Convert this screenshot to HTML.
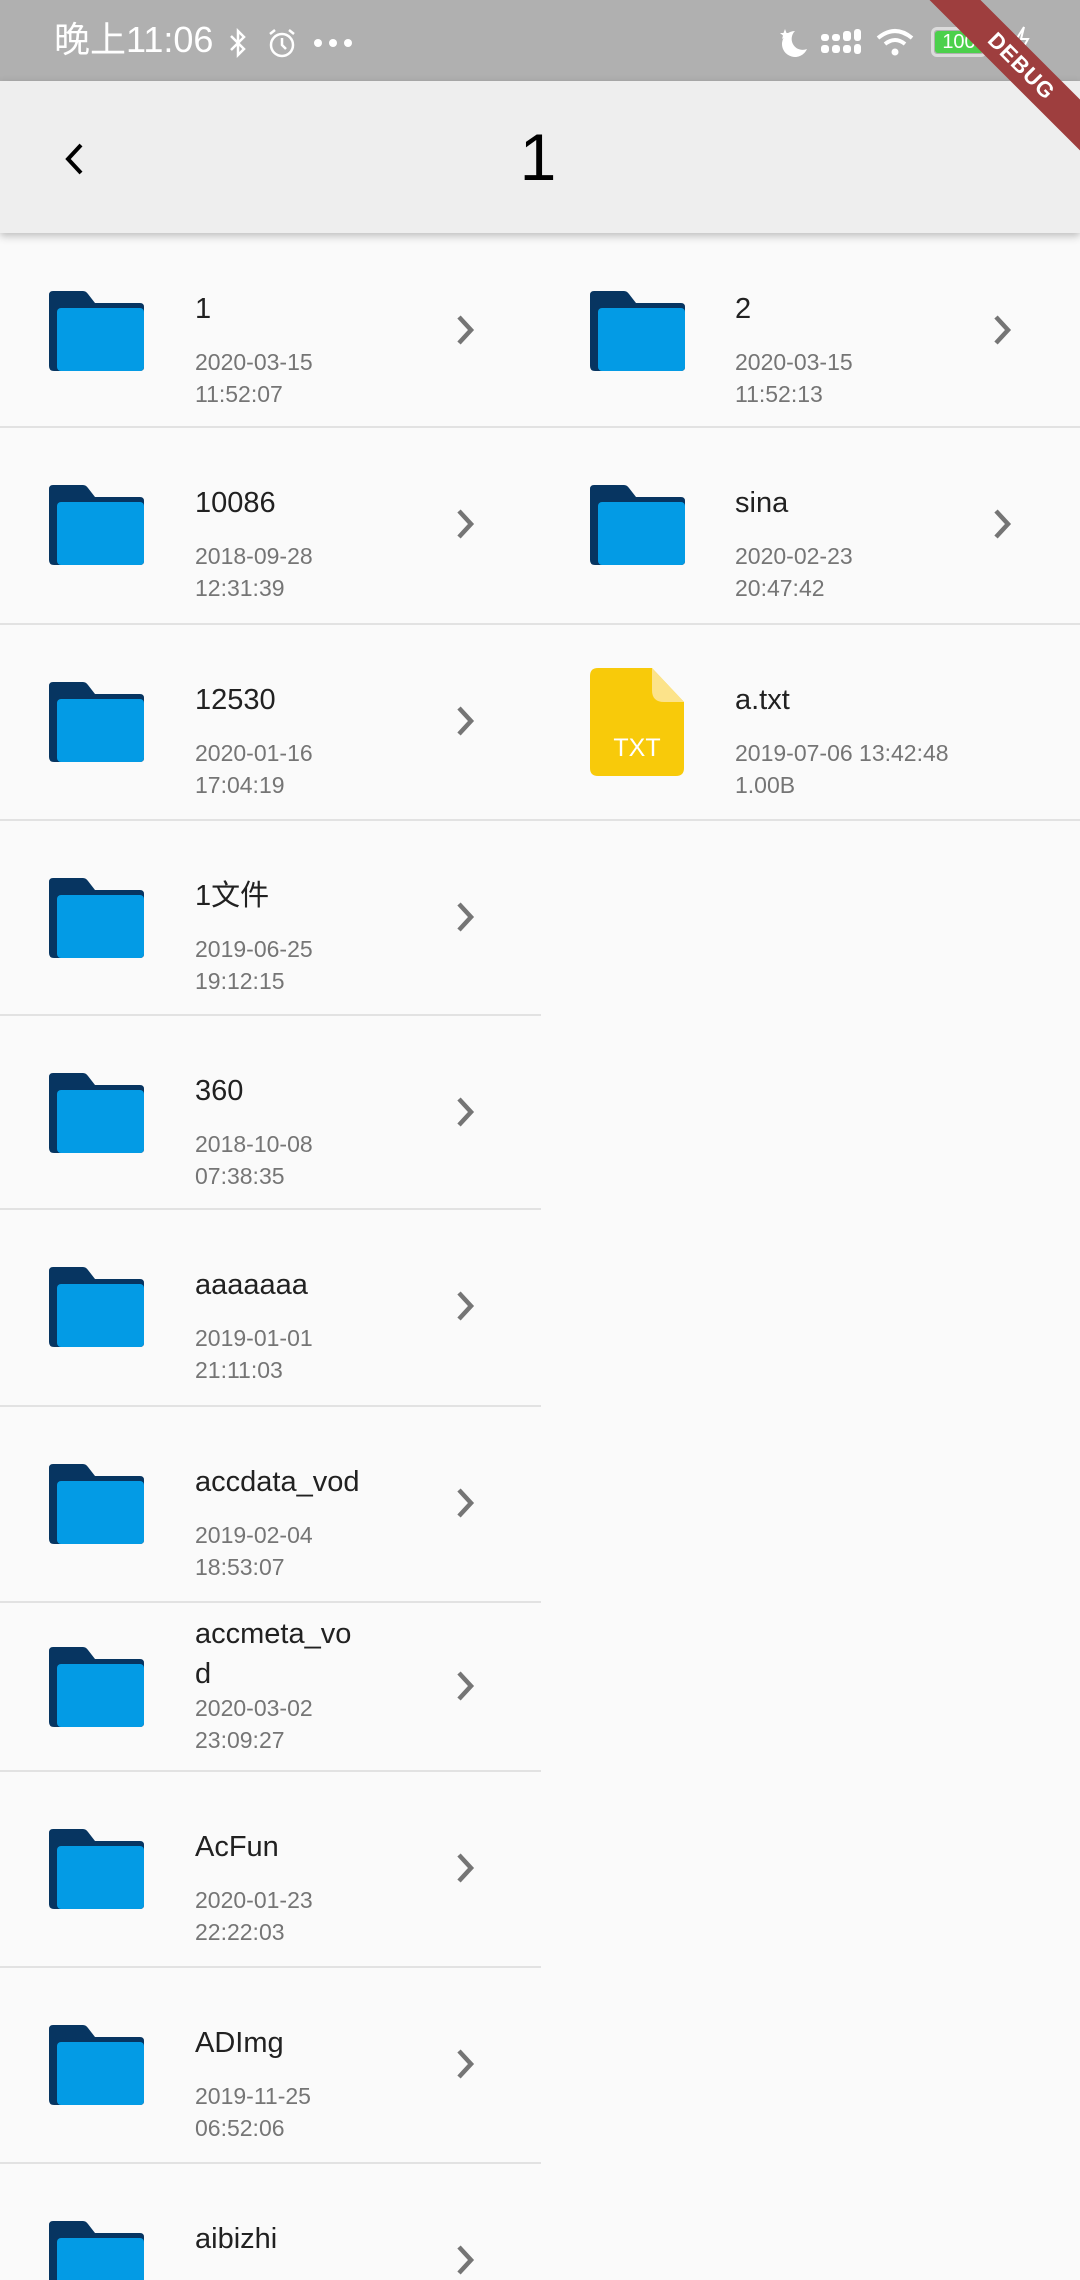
<!DOCTYPE html>
<html style="width:1080px;height:2280px;overflow:hidden"><head><meta charset="utf-8">
<style>
*{margin:0;padding:0;box-sizing:border-box}
body{width:1080px;height:2280px;overflow:hidden;background:#fafafa;font-family:"Liberation Sans","Noto Sans CJK SC",sans-serif;position:relative}
#sb{position:absolute;left:0;top:0;width:1080px;height:81px;background:#b0b0b0;color:#fff}
#ab{position:absolute;left:0;top:81px;width:1080px;height:152px;background:#eeeeee;box-shadow:0 3px 8px rgba(0,0,0,0.25);z-index:2}
.it{position:absolute;height:196px;overflow:hidden}
.it svg.f{position:absolute;left:49px;top:58px;width:95px;height:80px}
.nm{position:absolute;left:146px;top:56px;font-size:29px;line-height:40px;color:#212121}
.d{position:absolute;left:146px;font-size:23px;line-height:32px;color:#757575}
.d1{top:113px}.d2{top:145px}
.ch{position:absolute;left:455px;top:81px;width:22px;height:32px}
.sep{position:absolute;left:0;height:2px;background:#e2e2e2}
</style></head><body>
<svg width="0" height="0" style="position:absolute">
<defs>
<symbol id="fold" viewBox="0 0 95 80">
<path d="M0,4 Q0,0 4,0 H34 Q37,0 39,3 L46,12 H91 Q95,12 95,16 V76 Q95,80 91,80 H5 Q0,80 0,75 Z" fill="#073561"/>
<rect x="8" y="17" width="87" height="63" rx="4" fill="#039be5"/>
</symbol>
<symbol id="chev" viewBox="0 0 22 32"><path d="M4,3 L16,16 L4,29" fill="none" stroke="#757575" stroke-width="4.5"/></symbol>
</defs></svg>

<div id="sb">
<div style="position:absolute;left:54px;top:18px;font-size:36px;line-height:44px">晚上11:06</div>
<svg style="position:absolute;left:228px;top:27px" width="20" height="32" viewBox="0 0 20 32"><path d="M3,9 L16,22 L10,28 V4 L16,10 L3,23" fill="none" stroke="#fff" stroke-width="2.5"/></svg>
<svg style="position:absolute;left:266px;top:27px" width="32" height="32" viewBox="0 0 32 32"><circle cx="16" cy="18" r="11" fill="none" stroke="#fff" stroke-width="2.5"/><path d="M16,11 V18 L20,22 M4,7 L9,3 M28,7 L23,3" stroke="#fff" stroke-width="2.5" fill="none"/></svg>
<div style="position:absolute;left:314px;top:39px;width:8px;height:8px;border-radius:4px;background:#fff"></div>
<div style="position:absolute;left:329px;top:39px;width:8px;height:8px;border-radius:4px;background:#fff"></div>
<div style="position:absolute;left:344px;top:39px;width:8px;height:8px;border-radius:4px;background:#fff"></div>
<svg style="position:absolute;left:777px;top:27px" width="32" height="32" viewBox="0 0 32 32"><path d="M18,4 A13,13 0 1 0 30,22 A11,11 0 0 1 18,4 Z" fill="#fff"/><path d="M8,2 L9.5,6 L13,6 L10,8.5 L11,12 L8,10 L5,12 L6,8.5 L3,6 L6.5,6Z" fill="#fff"/></svg>
<svg style="position:absolute;left:821px;top:29px" width="40" height="28" viewBox="0 0 40 28"><g fill="#fff"><rect x="0" y="5" width="8" height="7" rx="3"/><rect x="11" y="5" width="8" height="7" rx="3"/><rect x="22" y="2" width="8" height="10" rx="3"/><rect x="33" y="0" width="7" height="12" rx="3"/><rect x="0" y="16" width="8" height="8" rx="3"/><rect x="11" y="16" width="8" height="8" rx="3"/><rect x="22" y="16" width="8" height="8" rx="3"/><rect x="33" y="15" width="7" height="10" rx="3"/></g></svg>
<svg style="position:absolute;left:875px;top:28px" width="40" height="28" viewBox="0 0 40 28"><path d="M3,10 Q20,-4 37,10" fill="none" stroke="#fff" stroke-width="4"/><path d="M10,16 Q20,8 30,16" fill="none" stroke="#fff" stroke-width="4"/><circle cx="20" cy="24" r="3.5" fill="#fff"/></svg>
<div style="position:absolute;left:931px;top:27px;width:56px;height:30px;border:3px solid rgba(255,255,255,0.55);border-radius:6px"></div>
<div style="position:absolute;left:935px;top:31px;width:48px;height:22px;background:#4cd04c;border-radius:3px;color:#fff;font-size:20px;line-height:22px;text-align:center">100</div>
<svg style="position:absolute;left:1010px;top:25px" width="22" height="34" viewBox="0 0 22 34"><path d="M14,2 L4,18 H11 L8,32 L18,14 H11 L14,2 Z" fill="none" stroke="#fff" stroke-width="2"/></svg>
</div>

<div id="ab">
<svg style="position:absolute;left:62px;top:61px" width="24" height="34" viewBox="0 0 24 34"><path d="M19,3 L6,17 L19,31" fill="none" stroke="#000" stroke-width="4"/></svg>
<div style="position:absolute;left:0;width:1076px;top:36px;text-align:center;font-size:66px;line-height:80px;color:#000">1</div>
</div>

<div style="position:absolute;left:887px;top:49px;width:270px;height:36px;background:#9e3e3e;transform:rotate(45deg);color:#fff;font-weight:bold;font-size:22px;line-height:36px;text-align:center;z-index:5;letter-spacing:1px;text-indent:-2px">DEBUG</div>

<div class="it" style="left:0;top:233px;width:541px"><svg class="f"><use href="#fold"/></svg><div class="nm" style="left:195px">1</div><div class="d d1" style="left:195px">2020-03-15</div><div class="d d2" style="left:195px">11:52:07</div><svg class="ch"><use href="#chev"/></svg></div>
<div class="it" style="left:0;top:427px;width:541px"><svg class="f"><use href="#fold"/></svg><div class="nm" style="left:195px">10086</div><div class="d d1" style="left:195px">2018-09-28</div><div class="d d2" style="left:195px">12:31:39</div><svg class="ch"><use href="#chev"/></svg></div>
<div class="it" style="left:0;top:624px;width:541px"><svg class="f"><use href="#fold"/></svg><div class="nm" style="left:195px">12530</div><div class="d d1" style="left:195px">2020-01-16</div><div class="d d2" style="left:195px">17:04:19</div><svg class="ch"><use href="#chev"/></svg></div>
<div class="it" style="left:0;top:820px;width:541px"><svg class="f"><use href="#fold"/></svg><div class="nm" style="left:195px">1文件</div><div class="d d1" style="left:195px">2019-06-25</div><div class="d d2" style="left:195px">19:12:15</div><svg class="ch"><use href="#chev"/></svg></div>
<div class="it" style="left:0;top:1015px;width:541px"><svg class="f"><use href="#fold"/></svg><div class="nm" style="left:195px">360</div><div class="d d1" style="left:195px">2018-10-08</div><div class="d d2" style="left:195px">07:38:35</div><svg class="ch"><use href="#chev"/></svg></div>
<div class="it" style="left:0;top:1209px;width:541px"><svg class="f"><use href="#fold"/></svg><div class="nm" style="left:195px">aaaaaaa</div><div class="d d1" style="left:195px">2019-01-01</div><div class="d d2" style="left:195px">21:11:03</div><svg class="ch"><use href="#chev"/></svg></div>
<div class="it" style="left:0;top:1406px;width:541px"><svg class="f"><use href="#fold"/></svg><div class="nm" style="left:195px">accdata_vod</div><div class="d d1" style="left:195px">2019-02-04</div><div class="d d2" style="left:195px">18:53:07</div><svg class="ch"><use href="#chev"/></svg></div>
<div class="it" style="left:0;top:1602px;width:541px;height:169px"><svg class="f" style="top:45px"><use href="#fold"/></svg><div class="nm" style="left:195px;top:12px">accmeta_vo<br>d</div><div class="d" style="left:195px;top:90px">2020-03-02</div><div class="d" style="left:195px;top:122px">23:09:27</div><svg class="ch" style="top:68px"><use href="#chev"/></svg></div>
<div class="it" style="left:0;top:1771px;width:541px"><svg class="f"><use href="#fold"/></svg><div class="nm" style="left:195px">AcFun</div><div class="d d1" style="left:195px">2020-01-23</div><div class="d d2" style="left:195px">22:22:03</div><svg class="ch"><use href="#chev"/></svg></div>
<div class="it" style="left:0;top:1967px;width:541px"><svg class="f"><use href="#fold"/></svg><div class="nm" style="left:195px">ADImg</div><div class="d d1" style="left:195px">2019-11-25</div><div class="d d2" style="left:195px">06:52:06</div><svg class="ch"><use href="#chev"/></svg></div>
<div class="it" style="left:0;top:2163px;width:541px;height:117px"><svg class="f"><use href="#fold"/></svg><div class="nm" style="left:195px">aibizhi</div><svg class="ch"><use href="#chev"/></svg></div>

<div class="it" style="left:541px;top:233px;width:539px"><svg class="f"><use href="#fold"/></svg><div class="nm" style="left:194px">2</div><div class="d d1" style="left:194px">2020-03-15</div><div class="d d2" style="left:194px">11:52:13</div><svg class="ch" style="left:451px"><use href="#chev"/></svg></div>
<div class="it" style="left:541px;top:427px;width:539px"><svg class="f"><use href="#fold"/></svg><div class="nm" style="left:194px">sina</div><div class="d d1" style="left:194px">2020-02-23</div><div class="d d2" style="left:194px">20:47:42</div><svg class="ch" style="left:451px"><use href="#chev"/></svg></div>
<div class="it" style="left:541px;top:624px;width:539px">
<svg style="position:absolute;left:49px;top:44px" width="94" height="108" viewBox="0 0 94 108"><path d="M8,0 H62 L94,34 V100 Q94,108 86,108 H8 Q0,108 0,100 V8 Q0,0 8,0 Z" fill="#f8ca0a"/><path d="M62,0 V22 Q62,34 74,34 H94 Z" fill="#fce38a"/><text x="47" y="88" text-anchor="middle" font-family="Liberation Sans, sans-serif" font-size="25" fill="#fff">TXT</text></svg>
<div class="nm" style="left:194px">a.txt</div><div class="d d1" style="left:194px">2019-07-06 13:42:48</div><div class="d d2" style="left:194px">1.00B</div></div>

<div class="sep" style="top:426px;width:1080px"></div>
<div class="sep" style="top:623px;width:1080px"></div>
<div class="sep" style="top:819px;width:1080px"></div>
<div class="sep" style="top:1014px;width:541px"></div>
<div class="sep" style="top:1208px;width:541px"></div>
<div class="sep" style="top:1405px;width:541px"></div>
<div class="sep" style="top:1601px;width:541px"></div>
<div class="sep" style="top:1770px;width:541px"></div>
<div class="sep" style="top:1966px;width:541px"></div>
<div class="sep" style="top:2162px;width:541px"></div>
</body></html>
